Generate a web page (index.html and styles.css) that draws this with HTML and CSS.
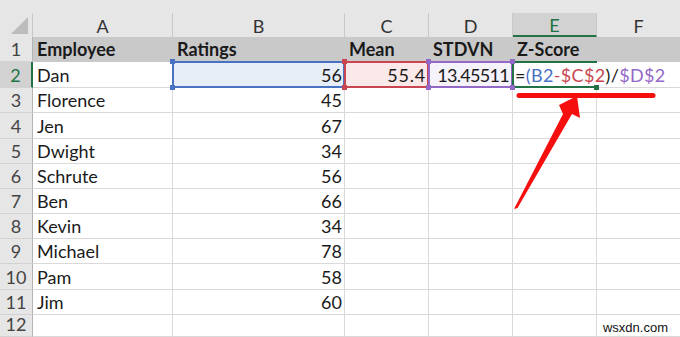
FILE: index.html
```html
<!DOCTYPE html>
<html>
<head>
<meta charset="utf-8">
<link rel="stylesheet" href="styles.css">
</head>
<body>
<div class="sheet">
  <div class="topband"></div>
  <div class="corner"><span class="tri"></span></div>
  <div class="colhead">A</div>
  <div class="colhead">B</div>
  <div class="colhead">C</div>
  <div class="colhead">D</div>
  <div class="colhead active">E</div>
  <div class="colhead last">F</div>

  <div class="rowhead">1</div>
  <div class="cell hdr">Employee</div>
  <div class="cell hdr">Ratings</div>
  <div class="cell hdr">Mean</div>
  <div class="cell hdr">STDVN</div>
  <div class="cell hdr">Z-Score</div>
  <div class="cell hdr last"></div>

  <div class="rowhead active">2</div>
  <div class="cell">Dan</div>
  <div class="cell num sel-blue">56<i class="h tl"></i><i class="h tr"></i><i class="h bl"></i><i class="h br"></i></div>
  <div class="cell num wide sel-red">55.4<i class="h tl"></i><i class="h tr"></i><i class="h bl"></i><i class="h br"></i></div>
  <div class="cell num tight sel-purple">13.45511<i class="h tl"></i><i class="h tr"></i><i class="h bl"></i><i class="h br"></i></div>
  <div class="cell formula sel-green"><span class="k">=</span><span class="b">(B2</span><span class="r">-$C$2</span><span class="k">)/</span><span class="p">$D$2</span><i class="h br"></i></div>
  <div class="cell last"></div>

  <div class="rowhead">3</div><div class="cell">Florence</div><div class="cell num">45</div><div class="cell"></div><div class="cell"></div><div class="cell"></div><div class="cell last"></div>
  <div class="rowhead">4</div><div class="cell">Jen</div><div class="cell num">67</div><div class="cell"></div><div class="cell"></div><div class="cell"></div><div class="cell last"></div>
  <div class="rowhead">5</div><div class="cell">Dwight</div><div class="cell num">34</div><div class="cell"></div><div class="cell"></div><div class="cell"></div><div class="cell last"></div>
  <div class="rowhead">6</div><div class="cell">Schrute</div><div class="cell num">56</div><div class="cell"></div><div class="cell"></div><div class="cell"></div><div class="cell last"></div>
  <div class="rowhead">7</div><div class="cell">Ben</div><div class="cell num">66</div><div class="cell"></div><div class="cell"></div><div class="cell"></div><div class="cell last"></div>
  <div class="rowhead">8</div><div class="cell">Kevin</div><div class="cell num">34</div><div class="cell"></div><div class="cell"></div><div class="cell"></div><div class="cell last"></div>
  <div class="rowhead">9</div><div class="cell">Michael</div><div class="cell num">78</div><div class="cell"></div><div class="cell"></div><div class="cell"></div><div class="cell last"></div>
  <div class="rowhead">10</div><div class="cell">Pam</div><div class="cell num">58</div><div class="cell"></div><div class="cell"></div><div class="cell"></div><div class="cell last"></div>
  <div class="rowhead">11</div><div class="cell">Jim</div><div class="cell num">60</div><div class="cell"></div><div class="cell"></div><div class="cell"></div><div class="cell last"></div>
  <div class="rowhead">12</div><div class="cell"></div><div class="cell"></div><div class="cell"></div><div class="cell"></div><div class="cell"></div><div class="cell last"></div>
</div>

<svg class="annot" width="680" height="337" viewBox="0 0 680 337">
  <line x1="519" y1="95.5" x2="653" y2="95.5" stroke="#f50f0f" stroke-width="5" stroke-linecap="round"/>
  <polygon points="514,209 563,114 559,105 577,96 580,118 572,114 517.5,208" fill="#f50f0f"/>
</svg>

<div class="watermark">wsxdn.com</div>
</body>
</html>
```

FILE: styles.css
```css
html, body {
  margin: 0;
  padding: 0;
  background: #ffffff;
}

body {
  width: 680px;
  height: 337px;
  overflow: hidden;
  position: relative;
  font-family: Lato, "Liberation Sans", sans-serif;
}

.sheet {
  display: grid;
  grid-template-columns: 33px 140px 172px 84px 84px 84px 83px;
  grid-template-rows: 13px 24px 25px 26px 25px 26px 25px 25px 25px 25px 25px 26px 25px 22px;
  width: 680px;
  height: 337px;
}

.topband {
  grid-column: 1 / -1;
  background: #e6e6e6;
}

.corner {
  background: #e6e6e6;
  border-right: 1px solid #c8c8c8;
  position: relative;
}

.tri {
  position: absolute;
  right: 4px;
  bottom: 3px;
  width: 0;
  height: 0;
  border-left: 17px solid transparent;
  border-bottom: 17px solid #bcbcbc;
}

.colhead {
  background: #e6e6e6;
  border-right: 1px solid #c8c8c8;
  box-sizing: border-box;
  display: flex;
  align-items: flex-end;
  justify-content: center;
  font-size: 18px;
  color: #333;
  line-height: 22px;
}

.colhead.last { border-right: none; }

.colhead.active {
  background: #d2d2d2;
  color: #217346;
  border-bottom: 2px solid #217346;
  line-height: 20px;
}

.rowhead {
  background: #e6e6e6;
  border-right: 1px solid #b4b4b4;
  border-bottom: 1px solid #d2d2d2;
  box-sizing: border-box;
  display: flex;
  align-items: flex-end;
  justify-content: center;
  font-size: 18px;
  color: #444;
  line-height: 23px;
}

.rowhead.active {
  background: #d2d2d2;
  color: #217346;
  border-right: 2px solid #217346;
}

.cell {
  position: relative;
  box-sizing: border-box;
  border-right: 1px solid #d9d9d9;
  border-bottom: 1px solid #d9d9d9;
  display: flex;
  align-items: flex-end;
  padding: 0 3px 0 4px;
  font-size: 18px;
  line-height: 23px;
  color: #1a1a1a;
  white-space: nowrap;
}

.cell.last { border-right: none; }

.cell.hdr {
  background: #c9c9c9;
  font-weight: bold;
  border-right-color: #c9c9c9;
  border-bottom-color: #c9c9c9;
}

.cell.num { justify-content: flex-end; padding-right: 2px; }
.cell.wide { letter-spacing: 0.8px; padding-right: 2px; }
.cell.tight { letter-spacing: -0.7px; padding-right: 3px; }

.sel-blue { background: #e8eef8; }
.sel-red { background: #fbe8e8; }
.sel-purple { background: #f6f2fa; }
.sel-green { border-right-color: transparent; z-index: 1; }

.sel-blue::after,
.sel-red::after,
.sel-purple::after,
.sel-green::after {
  content: "";
  position: absolute;
  left: -1px;
  top: -1px;
  right: -1px;
  bottom: -1px;
  border: 2px solid;
  pointer-events: none;
}

.sel-blue::after { border-color: #4a72c3; }
.sel-red::after { border-color: #c8464f; }
.sel-purple::after { border-color: #9468c6; }
.sel-green::after { border-color: #217346; border-right: none; }

.h {
  position: absolute;
  width: 5px;
  height: 5px;
  z-index: 2;
}
.h.tl { left: -3px; top: -3px; }
.h.tr { right: -3px; top: -3px; }
.h.bl { left: -3px; bottom: -3px; }
.h.br { right: -3px; bottom: -3px; }

.sel-blue .h { background: #4a72c3; }
.sel-red .h { background: #c8464f; }
.sel-purple .h { background: #9468c6; }
.sel-green .h { background: #217346; }

.formula { padding-left: 2px; letter-spacing: 0.35px; }
.formula .k { color: #222; }
.formula .b { color: #4a72c3; }
.formula .r { color: #c8464f; }
.formula .p { color: #9468c6; }

.annot {
  position: absolute;
  left: 0;
  top: 0;
  pointer-events: none;
}

.watermark {
  position: absolute;
  right: 11px;
  bottom: 2px;
  font-family: "Liberation Sans", sans-serif;
  font-size: 13px;
  color: #111;
  background: #ffffff;
  padding: 0 1px;
}
```
